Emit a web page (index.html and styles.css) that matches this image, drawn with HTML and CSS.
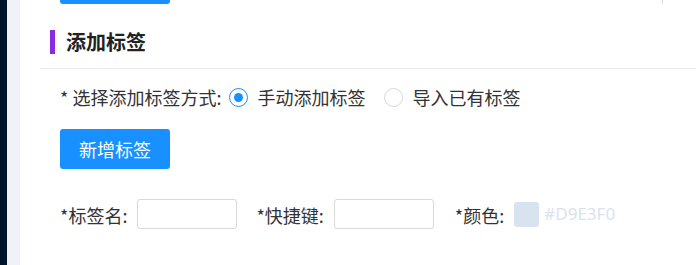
FILE: index.html
```html
<!DOCTYPE html>
<html lang="zh-CN">
<head>
<meta charset="utf-8">
<link rel="stylesheet" href="styles.css">
</head>
<body>
<div class="layout">
  <aside class="sider"></aside>
  <main class="main">
    <section class="card">
      <div class="top">
        <span class="btn btn-top"></span>
        <span class="top-line"></span>
      </div>
      <div class="title-row">
        <span class="title-bar"></span>
        <h2 class="title">添加标签</h2>
      </div>
      <div class="divider"></div>
      <div class="form">
        <div class="row row-mode">
          <span class="label">* 选择添加标签方式:</span>
          <label class="radio checked"><span class="radio-circle"></span><span class="radio-text">手动添加标签</span></label>
          <label class="radio"><span class="radio-circle"></span><span class="radio-text">导入已有标签</span></label>
        </div>
        <div class="row row-btn">
          <button class="btn" type="button">新增标签</button>
        </div>
        <div class="row row-fields">
          <span class="label">*标签名:</span>
          <input class="input" type="text">
          <span class="label label-gap">*快捷键:</span>
          <input class="input" type="text">
          <span class="label label-gap2">*颜色:</span>
          <span class="swatch"></span>
          <span class="color-text">#D9E3F0</span>
        </div>
      </div>
    </section>
  </main>
</div>
</body>
</html>
```

FILE: styles.css
```css
* { box-sizing: border-box; }
html, body {
  margin: 0;
  padding: 0;
  height: 100%;
  background: #fff;
  font-family: "Noto Sans CJK SC", "Noto Sans", sans-serif;
  color: #333;
}
.layout {
  display: flex;
  height: 265px;
  overflow: hidden;
}
.sider {
  width: 7px;
  flex: none;
  background: #001529;
}
.main {
  flex: 1;
  background: #f0f2f5;
  padding-left: 13px;
  display: flex;
}
.card {
  flex: 1;
  background: #fff;
  padding-left: 20px;
}
.top {
  height: 4px;
  overflow: hidden;
  display: flex;
  padding-left: 20px;
}
.btn {
  display: block;
  width: 110px;
  height: 40px;
  border: 0;
  border-radius: 3px;
  background: #1890ff;
  color: #fff;
  font-family: "Noto Sans CJK SC", sans-serif;
  font-size: 18px;
  line-height: 40px;
  padding: 0;
  cursor: pointer;
}
.btn-top {
  margin-top: -36px;
  flex: none;
}
.top-line {
  width: 1px;
  height: 4px;
  background: #d9d9d9;
  margin-left: 492px;
}
.title-row {
  display: flex;
  align-items: center;
  height: 24px;
  margin-top: 26px;
  padding-left: 10px;
}
.title-bar {
  width: 5px;
  height: 24px;
  background: #8a2be2;
  margin-right: 11px;
}
.title {
  margin: 0;
  font-size: 20px;
  font-weight: 700;
  color: #222;
  line-height: 24px;
}
.divider {
  height: 1px;
  background: #ebebeb;
  margin-top: 14px;
}
.form {
  padding-left: 20px;
}
.row {
  display: flex;
  align-items: center;
}
.row-mode {
  height: 32px;
  margin-top: 12px;
}
.label {
  font-size: 18px;
  line-height: 32px;
  white-space: nowrap;
}
.row-mode .label {
  margin-right: 8px;
}
.radio {
  display: flex;
  align-items: center;
  margin-right: 19px;
  font-size: 18px;
}
.radio-circle {
  width: 19px;
  height: 19px;
  border-radius: 50%;
  border: 1px solid #d9d9d9;
  background: #fff;
  margin-right: 9px;
  position: relative;
}
.radio.checked .radio-circle {
  border-color: #1890ff;
}
.radio.checked .radio-circle::after {
  content: "";
  position: absolute;
  left: 4px;
  top: 4px;
  width: 9px;
  height: 9px;
  border-radius: 50%;
  background: #1890ff;
}
.radio-text {
  line-height: 32px;
}
.row-btn {
  margin-top: 16px;
}
.row-fields {
  margin-top: 30px;
  height: 30px;
}
.row-fields .label {
  margin-right: 10px;
  line-height: 30px;
  padding-top: 1px;
}
.input {
  width: 100px;
  height: 30px;
  border: 1px solid #d9d9d9;
  border-radius: 3px;
  background: #fff;
  padding: 0 8px;
  font-size: 14px;
  outline: none;
}
.label-gap { margin-left: 19px; }
.label-gap2 { margin-left: 21px; }
.swatch {
  width: 25px;
  height: 25px;
  border-radius: 3px;
  background: #d9e3f0;
}
.color-text {
  margin-left: 5px;
  font-family: "Noto Sans", sans-serif;
  font-size: 17px;
  color: #d9e3f0;
  line-height: 30px;
}
```
